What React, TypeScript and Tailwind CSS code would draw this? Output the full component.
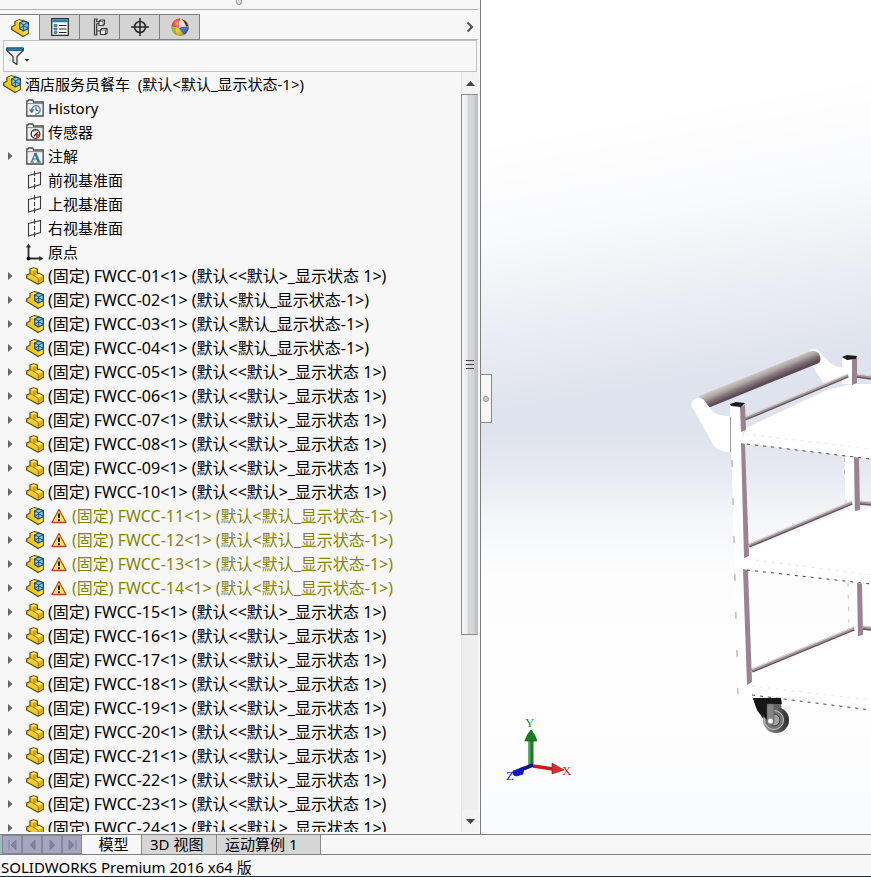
import type { ReactNode } from 'react';

type IconName = 'history' | 'sensor' | 'note' | 'plane' | 'origin' | 'part' | 'assembly';

type TreeItem = {
  label: string;
  icon: IconName;
  expandable?: boolean;
  warning?: boolean;
};

const assemblies = [2, 3, 4, 11, 12, 13, 14];
const warned = [11, 12, 13, 14];

const features: TreeItem[] = [
  { label: 'History', icon: 'history' },
  { label: '传感器', icon: 'sensor' },
  { label: '注解', icon: 'note', expandable: true },
  { label: '前视基准面', icon: 'plane' },
  { label: '上视基准面', icon: 'plane' },
  { label: '右视基准面', icon: 'plane' },
  { label: '原点', icon: 'origin' },
];

const components: TreeItem[] = Array.from({ length: 24 }, (_, i) => {
  const n = i + 1;
  const isAssembly = assemblies.includes(n);
  const state = isAssembly ? '(默认<默认_显示状态-1>)' : '(默认<<默认>_显示状态 1>)';
  return {
    label: `(固定) FWCC-${String(n).padStart(2, '0')}<1> ${state}`,
    icon: isAssembly ? 'assembly' : 'part',
    expandable: true,
    warning: warned.includes(n),
  };
});

function Svg({ children, size = 18 }: { children: ReactNode; size?: number }) {
  return (
    <svg width={size} height={size} viewBox="0 0 18 18" fill="none" className="shrink-0" aria-hidden="true">
      {children}
    </svg>
  );
}

function PartIcon() {
  return (
    <Svg>
      <path d="M4 2 7.500.8 11.500 2v4.800l1.500-.6 4.300 2.500v5.500l-5.300 3.100L.7 11V8L4 6.500z" fill="#f5ca22" stroke="#5d480c" strokeWidth="1.200" strokeLinejoin="round" />
      <path d="M4.600 2.200 7.500 1.400l3.400.9L8 3.600z" fill="#fff0a8" />
      <path d="m9 8.600 4-1.800 3.500 2-4.300 2.300z" fill="#ffe57a" />
      <path d="m8.300 3.900 2.700-1.200v4.400L8.300 8.400zM12.500 11.700l4.300-2.400v4.600l-4.300 2.600z" fill="#ddab18" />
      <path d="M8 3.800v4.800l4.200 2.700v5.700M8 8.600 4 6.500" stroke="#7a5f12" strokeWidth=".7" />
    </Svg>
  );
}

function AssemblyIcon() {
  return (
    <Svg>
      <path d="M4 2.500 8 .7l4 .8 5.300 2.200v10.800L12 17.400.7 10.500V7.800L4 6z" fill="#f4c81e" stroke="#5d480c" strokeWidth="1.200" strokeLinejoin="round" />
      <path d="M4.800 2.700 8 1.300l3.300.8L8.500 3.500z" fill="#fff0a8" />
      <path d="M12.500 12.500v4.200l4.200-2.600V10z" fill="#ffe338" />
      <path d="M8.700 3.800 12.700 2l4.600 1.700v6L12.500 12l-3.800-2.300z" fill="#8cc4dd" stroke="#174b6b" strokeWidth="1.100" strokeLinejoin="round" />
      <path d="m8.900 4 3.800 1.800 4.600-2M12.600 5.800v6M8.700 9.500l3.800-2.500 4.500 2" stroke="#174b6b" strokeWidth=".9" />
    </Svg>
  );
}

function FolderShape() {
  return (
    <>
      <path d="M.8 17V2h1L2.600 1h4l1 2h9.600v14z" fill="#efefef" stroke="#4a4a4a" strokeWidth="1.300" />
      <path d="M1 4.600h16" stroke="#6a6a6a" strokeWidth=".8" />
    </>
  );
}

function TreeIcon({ name }: { name: IconName }) {
  if (name === 'part') return <PartIcon />;
  if (name === 'assembly') return <AssemblyIcon />;
  if (name === 'plane')
    return (
      <Svg>
        <path d="M2.500 4.500 14.500 1.500v12l-12 3.500z" stroke="#3c3c3c" strokeWidth="1.100" />
        <path d="M8.500 0v5M8.500 7v4M8.500 13v5" stroke="#3c3c3c" strokeWidth="1.100" />
      </Svg>
    );
  if (name === 'origin')
    return (
      <Svg>
        <path d="M2.500 3v12.500h12" stroke="#2e2e2e" strokeWidth="1.800" />
        <path d="M0 4.500 2.500.3 5 4.500zM13.300 13l4.200 2.500-4.200 2.500z" fill="#2e2e2e" />
        <circle cx="2.500" cy="15.500" r="1.900" fill="#111" />
      </Svg>
    );
  return (
    <Svg>
      <FolderShape />
      {name === 'history' && (
        <>
          <path d="M6 12a4.200 4.200 0 1 1 3.200 2.900" stroke="#3d85a8" strokeWidth="1.300" />
          <path d="m3 10.500 2.800 3.700 2.500-3.700z" fill="#2b7296" />
          <path d="M10 8.300v2.700l2.500 1" stroke="#333" strokeWidth="1" />
        </>
      )}
      {name === 'sensor' && (
        <>
          <circle cx="9.500" cy="11" r="4.300" fill="#fff" stroke="#333" strokeWidth="1.300" />
          <path d="M9.500 11h4a4 4 0 0 1-3.500 4z" fill="#e04a26" />
          <path d="M6.800 9A3.300 3.300 0 0 1 10 7.700" stroke="#3d8fc0" strokeWidth="1.200" />
          <path d="m8 13 4-4" stroke="#222" strokeWidth="1.300" />
        </>
      )}
      {name === 'note' && (
        <>
          <path d="m5.500 15 3.700-9M7 12h5M4.500 15H8M10.500 15H15" stroke="#2d6f92" strokeWidth="1.100" />
          <path d="m9.200 6 3.800 9" stroke="#2d6f92" strokeWidth="2.200" />
        </>
      )}
    </Svg>
  );
}

function WarningIcon() {
  return (
    <svg width="16" height="16" viewBox="0 0 16 16" className="mr-[5px] ml-[7px] shrink-0" aria-hidden="true">
      <path d="M8 1.500 15 14.500H1z" fill="#ffe45c" stroke="#b5461c" strokeWidth="1.300" strokeLinejoin="round" />
      <path d="M7 5.500h2V10H7zM7 11.300h2v2H7z" fill="#111" />
    </svg>
  );
}

function TreeRow({ item }: { item: TreeItem }) {
  const size = item.icon === 'part' || item.icon === 'assembly' ? 'text-base' : 'text-[15px]';
  const tone = item.warning ? 'text-[#85850a]' : 'pl-1';
  return (
    <li className={`flex h-6 items-center ${size}`}>
      <span className="flex w-[26px] shrink-0 pl-2">
        {item.expandable && (
          <button type="button" aria-label="展开" className="flex">
            <svg width="5" height="8" viewBox="0 0 5 8" aria-hidden="true">
              <path d="M0 0 4.500 4 0 8z" fill="#666" />
            </svg>
          </button>
        )}
      </span>
      <TreeIcon name={item.icon} />
      {item.warning && <WarningIcon />}
      <span className={tone}>{item.label}</span>
    </li>
  );
}

function PanelTabs() {
  const idle = 'flex h-full w-10 items-center justify-center border-r border-b border-[#808080] bg-[#d4d4d4]';
  return (
    <div className="flex h-[30px] shrink-0 items-end pr-[2px]">
      <div className="flex h-[26px] border-t border-[#808080]">
        <button type="button" aria-label="特征树" className="flex h-full w-10 items-center justify-center border-r border-[#808080]">
          <AssemblyIcon />
        </button>
        <button type="button" aria-label="属性" className={idle}>
          <Svg>
            <path d="M.7.700h16.600v16.600H.7z" fill="#fff" stroke="#2d2d2d" strokeWidth="1.300" />
            <path d="M1.300 1.300h15.400v3H1.300z" fill="#2f7ea5" />
            <path d="M3 6.500h3v2H3zM3 10h3v2H3zM3 13.500h3v2H3z" fill="#5ba0c0" stroke="#1f4f69" strokeWidth=".6" />
            <path d="M8 7.500h7.500M8 11h7.500M8 14.500h7.500" stroke="#222" strokeWidth="1.200" />
          </Svg>
        </button>
        <button type="button" aria-label="配置" className={idle}>
          <Svg>
            <path d="M3.500 1v16h2.200v-4h4M5.700 13V5.500M5.700 1v2.500h3M3 1h3.500M3 17h3.500M5.700 5.500H8" stroke="#3a3a3a" strokeWidth="1.200" />
            <path d="M8 3.500 9.500 2h4v4L12 7.500H8zM9.500 12l1.500-1.500h5V15l-1.500 1.500h-5z" fill="#efefef" stroke="#3a3a3a" strokeWidth="1.200" strokeLinejoin="round" />
            <path d="M8 3.500h4v4M12 3.500 13.500 2M9.500 12h5v4.500M14.500 12l1.500-1.500" stroke="#3a3a3a" strokeWidth=".7" />
          </Svg>
        </button>
        <button type="button" aria-label="尺寸" className={idle}>
          <Svg>
            <circle cx="9" cy="9" r="5.500" stroke="#262626" strokeWidth="1.600" />
            <path d="M9 0v18M0 9h18" stroke="#262626" strokeWidth="1.600" />
          </Svg>
        </button>
        <button type="button" aria-label="外观" className={idle}>
          <Svg>
            <defs>
              <radialGradient id="gloss" cx=".35" cy=".3" r=".75">
                <stop offset="0" stopColor="#fff" stopOpacity=".55" />
                <stop offset=".45" stopColor="#fff" stopOpacity="0" />
                <stop offset="1" stopColor="#301010" stopOpacity=".4" />
              </radialGradient>
            </defs>
            <circle cx="9" cy="9" r="8.700" fill="#f7c71b" />
            <path d="M8 10 .4 8.500A8.700 8.700 0 0 1 9.500.4q-2 4-1.500 9.600z" fill="#df2a1c" />
            <path d="M8 10Q7.500 4 9.500.4a8.700 8.700 0 0 1 8.200 8.600Q13 8 8 10z" fill="#f3d9d2" />
            <path d="M10.500 1.200q5.500.8 7 7l-2.200.2q-1-4.400-4.800-7.200z" fill="#2b1a1a" />
            <path d="M8 10q5-2 9.700-1a8.700 8.700 0 0 1-4.200 7.500Q9.500 14 8 10z" fill="#2f6fd0" />
            <path d="M.4 8.500 8 10q.5 4 2 7.600A8.700 8.700 0 0 1 .4 8.500z" fill="#f2cb17" />
            <path d="M.4 9q3 0 4.500.5-.5 4 .6 7.400A8.700 8.700 0 0 1 .4 9z" fill="#7ec23a" />
            <circle cx="9" cy="9" r="8.700" fill="url(#gloss)" />
          </Svg>
        </button>
      </div>
      <div className="flex h-[26px] flex-1 items-center justify-end border-b border-[#b4b4b4] pr-1">
        <button type="button" aria-label="更多">
          <svg width="8" height="12" viewBox="0 0 8 12" fill="none" aria-hidden="true">
            <path d="m1.500 1.500 4.500 4.500-4.500 4.500" stroke="#555" strokeWidth="2.200" />
          </svg>
        </button>
      </div>
    </div>
  );
}

function ScrollBar() {
  return (
    <div className="flex w-[17px] shrink-0 flex-col border-l border-[#e2e2e2] bg-[#eeeeee]">
      <button type="button" aria-label="向上滚动" className="flex h-[22px] items-center justify-center bg-[#f3f3f3]">
        <svg width="9" height="5" viewBox="0 0 9 5" aria-hidden="true">
          <path d="m4.500 0 4.500 5H0z" fill="#444" />
        </svg>
      </button>
      <div className="min-h-0 flex-1">
        <div className="-ml-px flex h-[75.5%] flex-col items-center justify-center gap-[3px] border border-[#8c8c8c] border-r-[#c4c4c4] bg-[linear-gradient(90deg,#f7f7f7_0%,#ececec_35%,#d6d7d9_40%,#d6d7d9_70%,#bfbfc2_100%)]">
          <span className="h-px w-2 bg-[#444]" />
          <span className="h-px w-2 bg-[#444]" />
          <span className="h-px w-2 bg-[#444]" />
        </div>
      </div>
      <button type="button" aria-label="向下滚动" className="flex h-[22px] items-center justify-center bg-[#f3f3f3]">
        <svg width="9" height="5" viewBox="0 0 9 5" aria-hidden="true">
          <path d="M0 0h9L4.500 5z" fill="#444" />
        </svg>
      </button>
    </div>
  );
}

function FeaturePanel() {
  return (
    <aside className="flex w-[481px] shrink-0 flex-col border-r border-[#7c7c7c] bg-[#f7f7f7]">
      <div className="mr-[2px] flex h-[10px] shrink-0 items-start justify-center border-b border-[#b4b4b4]">
        <span className="h-[5px] w-[6px] rounded-b-full border border-t-0 border-[#999] bg-[#ddd]" />
      </div>
      <PanelTabs />
      <div className="mx-[3px] flex h-8 shrink-0 items-center border border-[#c0c0c0] pl-[2px]">
        <button type="button" aria-label="过滤器" className="flex items-center">
          <svg width="24" height="18" viewBox="0 0 24 18" fill="none" aria-hidden="true">
            <path d="M.7 1h16.600v2.500L11 9.500v8l-4-2.500V9.500L.7 3.500z" fill="#ececec" stroke="#333" strokeWidth="1.200" />
            <path d="M1 1h16v2.500H1z" fill="#2b86a8" stroke="#1c4d66" strokeWidth=".8" />
            <path d="M18.500 12h5L21 14.800z" fill="#333" />
          </svg>
        </button>
      </div>
      <div className="flex min-h-0 flex-1 pr-[2px] pb-[2px]">
        <div className="min-w-0 flex-1 overflow-hidden whitespace-pre">
          <div className="flex h-6 items-center gap-1 pl-[3px]">
            <AssemblyIcon />
            <span>{'酒店服务员餐车  (默认<默认_显示状态-1>)'}</span>
          </div>
          <ul>
            {[...features, ...components].map((item) => (
              <TreeRow key={item.label} item={item} />
            ))}
          </ul>
        </div>
        <ScrollBar />
      </div>
    </aside>
  );
}

function Rod({ d }: { d: string }) {
  return (
    <g fill="none">
      <path d={d} stroke="#665460" strokeWidth="3.500" />
      <path d={d} stroke="#a1949a" strokeWidth="2.500" transform="translate(0 -1)" />
      <path d={d} stroke="#ddd8d2" strokeWidth="1.200" transform="translate(0 -2)" />
    </g>
  );
}

function Cart() {
  return (
    <g>
      <defs>
        <linearGradient id="grip" gradientUnits="userSpaceOnUse" x1="755" y1="373" x2="760" y2="385">
          <stop offset="0" stopColor="#cfc8c2" />
          <stop offset=".35" stopColor="#b0a8a6" />
          <stop offset=".65" stopColor="#85767e" />
          <stop offset="1" stopColor="#5c4a55" />
        </linearGradient>
        <linearGradient id="tyre" x1="0" y1="0" x2="1" y2="0">
          <stop offset="0" stopColor="#9a9a9a" />
          <stop offset=".6" stopColor="#5b5b5b" />
          <stop offset="1" stopColor="#2c2830" />
        </linearGradient>
      </defs>

      {/* shelves */}
      <path d="M746 428 827 390l25-6h19v75l-130-16z" fill="#fff" />
      <path d="M747 550 845 511l26-2v75l-128-15z" fill="#fff" />
      <path d="M750 676 855 636h16v74l-128-15z" fill="#fff" />

      {/* back post */}
      <path d="M842 358h10v26h-10zM845 457h9v54h-9zM849 583h8v50h-8z" fill="#fff" />
      <path d="M852 360l5-2v25l-5 2zM854 457l5 1 1 52-5 1zM857 583l5 1 1 51-5 1z" fill="#9b8291" />
      <path d="m842 357 5-2 10 1-1 3-9 1z" fill="#1c1c1e" />
      <path d="M844.500 458v16M846 500v10M848 583l1 40" stroke="#c9c0c2" strokeDasharray="4 8" />

      {/* handle */}
      <path d="M809 351q6-4 10 0l9 10q6 6 14 6v12l-18 5-11-17z" fill="#fff" />
      <Rod d="M745 419 848 376" />
      <path d="M699 396 811 351c7-2 12 7 8 12L708 408z" fill="url(#grip)" />
      <path d="M691 405c0-6 8-9 13-5l9 12q6 4 17 4v36q-11 0-16-6z" fill="#fff" />

      <Rod d="M749 546 852 503" />
      <Rod d="M752 671 854 629" />
      <Rod d="m857 376 14 2" />
      <Rod d="m860 503 11 1" />
      <Rod d="m863 628 8 1" />

      {/* front post */}
      <path d="M730 406h12l5 289h-9z" fill="#fff" />
      <path d="M740 407l5-2 1 25-5 2zM741 443l4 1 4 112-5 2zM743 569l5 1 4 112-5 3z" fill="#9b8291" />
      <path d="m730 404 6-2 9 1-4 4-10-1z" fill="#1c1c1e" />
      <path d="M730.500 417v35" stroke="#a39999" />
      <path d="m732 460 6 234" stroke="#a79d9e" strokeDasharray="7 31" />

      <g strokeDasharray="3 5">
        <path d="m747 444 124 15M747 570l124 14M752 695l119 15" stroke="#444" />
        <path d="m745 434 126 15M748 559l123 16M752 686l119 14" stroke="#efe6e7" />
      </g>

      {/* caster */}
      <path d="M753 698h28l1 6-9 5-4 16-7-8-5-7z" fill="#161618" />
      <path d="m762 700 2 19" stroke="#4d4d4d" strokeWidth="2" />
      <path d="M773 704h8l1 8-9-2z" fill="#656167" />
      <circle cx="776" cy="720" r="13" fill="url(#tyre)" />
      <circle cx="774" cy="720" r="9.500" fill="#777" stroke="#c4c4c4" />
      <circle cx="774" cy="720" r="6" fill="#a3a3a3" stroke="#3d3d3d" />
      <path d="M753 698h28l-7 6h-7v16l-6-6-5-7z" fill="#161618" />
      <path d="M767 704h7v19l-3 3-4-3z" fill="#858585" stroke="#555" strokeWidth=".6" />
      <circle cx="770.500" cy="721" r="2.500" fill="#f1f2ff" />
    </g>
  );
}

function Triad() {
  return (
    <g>
      <path d="M528.500 738h5v27h-5z" fill="#1f7a22" />
      <path d="M528.500 738h2v27h-2z" fill="#4da350" />
      <path d="M531 730q4 4 6 11h-12q2-7 6-11z" fill="#1d7a20" stroke="#0b4d10" strokeWidth=".6" />
      <path d="m533 766 20 3" stroke="#c91a1a" strokeWidth="3.500" />
      <path d="m552 763 12 7-12 4z" fill="#d83030" stroke="#8d0d0d" strokeWidth=".6" />
      <path d="m533 765-13 5" stroke="#14149a" strokeWidth="4" />
      <path d="m524 767-11 4q-1 5 4 5l6-2z" fill="#1515c8" stroke="#0b0b8d" strokeWidth=".6" />
      <g fontFamily="'Liberation Serif', serif" fontSize="13">
        <text x="525" y="727" fill="#119911">Y</text>
        <text x="562" y="775" fill="#f01818">X</text>
        <text x="506" y="780" fill="#1414f0">Z</text>
      </g>
    </g>
  );
}

function Viewport() {
  return (
    <main className="relative min-w-0 flex-1 overflow-hidden bg-[linear-gradient(170deg,#ffffff_0px,#ffffff_140px,#ffffffcc_240px,#ffffff4d_345px,#ffffff00_410px),linear-gradient(180deg,#dfe3ed_0px,#dfe3ed_430px,#e6e9f1_470px,#f5f6f9_520px,#fdfdfd_580px,#fefefe_720px,#f9fafc_834px)]">
      <svg className="absolute inset-0 h-full w-full" role="img" aria-label="餐车模型">
        <g transform="translate(-481 0)">
          <Cart />
          <Triad />
        </g>
      </svg>
      <button
        type="button"
        aria-label="折叠面板"
        className="absolute top-[374px] left-0 flex h-[49px] w-[11px] items-center justify-center border border-l-0 border-[#8a8a8a] bg-[#f7f7f7]"
      >
        <span className="size-[6px] rounded-full border border-[#999] bg-[#ccc]" />
      </button>
    </main>
  );
}

function DocumentTabs() {
  const nav = 'flex h-[19px] w-5 items-center justify-center border border-[#8585a0] bg-[#a6a6bf]';
  const arrows = [
    { label: '第一个', d: 'M3 1v10M10 1 5 6l5 5z' },
    { label: '上一个', d: 'M9 1 4 6l5 5z' },
    { label: '下一个', d: 'm4 1 5 5-5 5z' },
    { label: '最后一个', d: 'M10 1v10M3 1l5 5-5 5z' },
  ];
  const idle = 'h-full border-r border-[#8a8a8a] bg-[#d6d6d6] pl-2';
  return (
    <nav className="flex h-[21px] shrink-0 border-y border-[#808080] bg-[#f7f7f7]">
      <div className="flex border-l-2 border-[#9ebcbc]">
        {arrows.map((a) => (
          <button key={a.label} type="button" aria-label={a.label} className={nav}>
            <svg width="12" height="12" viewBox="0 0 12 12" aria-hidden="true">
              <path d={a.d} fill="#8080a0" stroke="#8080a0" />
            </svg>
          </button>
        ))}
      </div>
      <button type="button" className="w-[60px] border-r border-[#8a8a8a] pl-1 leading-[19px]">模型</button>
      <button type="button" className={`${idle} w-[75px] text-left leading-[19px]`}>3D 视图</button>
      <button type="button" className={`${idle} w-[104px] text-left leading-[19px]`}>运动算例 1</button>
    </nav>
  );
}

export default function App() {
  return (
    <div className="flex h-screen flex-col overflow-hidden bg-[#f7f7f7] font-['Noto_Sans','Noto_Sans_CJK_SC',sans-serif] text-[15px] leading-6 text-black">
      <div className="flex min-h-0 flex-1">
        <FeaturePanel />
        <Viewport />
      </div>
      <DocumentTabs />
      <footer className="h-[22px] shrink-0 border-b border-[#1c2b36] pl-px">SOLIDWORKS Premium 2016 x64 版</footer>
    </div>
  );
}
